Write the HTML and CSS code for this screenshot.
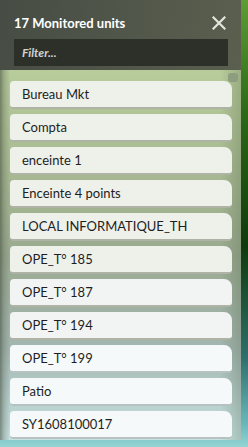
FILE: index.html
```html
<!DOCTYPE html>
<html lang="en">

<head>
    <meta charset="UTF-8">
    <meta name="viewport" content="width=device-width, initial-scale=1.0">
    <title>Monitored units</title>
    <link rel="stylesheet" href="styles.css">
</head>

<body>
    <div id="panel">
        <div class="header">
            <div class="title-row">
                <h2 class="title">17 Monitored units</h2>
                <span class="close">
                    <svg width="14" height="14" viewBox="0 0 14 14">
                        <path d="M1.5 1.5 L12.5 12.5 M12.5 1.5 L1.5 12.5" stroke="#e4e4dc" stroke-width="2.2" stroke-linecap="square"/>
                    </svg>
                </span>
            </div>
            <input type="text" class="filter" placeholder="Filter...">
        </div>

        <div class="list">
            <div class="thumb"></div>
            <div class="item">Bureau Mkt</div>
            <div class="item">Compta</div>
            <div class="item">enceinte 1</div>
            <div class="item">Enceinte 4 points</div>
            <div class="item">LOCAL INFORMATIQUE_TH</div>
            <div class="item">OPE_T° 185</div>
            <div class="item">OPE_T° 187</div>
            <div class="item">OPE_T° 194</div>
            <div class="item">OPE_T° 199</div>
            <div class="item">Patio</div>
            <div class="item">SY1608100017</div>
        </div>
    </div>
</body>

</html>
```

FILE: styles.css
```css
body {
    margin: 0;
    height: 447px;
    overflow: hidden;
    font-family: Lato, "Open Sans", sans-serif;
    background: linear-gradient(to bottom, #5e9c34 0%, #2c6a18 25%, #0f3a0b 55%, #2f6f6a 80%, #6ab8bc 95%, #94d4d4 100%);
}

#panel {
    width: 241px;
    height: 440px;
    display: flex;
    flex-direction: column;
}

.header {
    height: 70px;
    box-sizing: border-box;
    padding: 14px 13px 0 14px;
    background: linear-gradient(100deg, #474c44 0%, #52574b 55%, #5a5f4e 100%);
}

.title-row {
    display: flex;
    align-items: center;
    justify-content: space-between;
    height: 17px;
}

.title {
    margin: 0;
    font-size: 13px;
    font-weight: bold;
    color: #ffffff;
}

.close {
    display: flex;
    margin-right: 2px;
}

.filter {
    display: block;
    margin-top: 8px;
    width: 214px;
    height: 27px;
    box-sizing: border-box;
    padding: 0 8px;
    border: none;
    outline: none;
    background-color: #2d3029;
    font-family: Lato, sans-serif;
    font-size: 12px;
    font-style: italic;
    font-weight: bold;
    color: #d0d4d4;
}

.filter::placeholder {
    color: #cfd3d3;
}

.list {
    position: relative;
    flex: 1;
    display: flex;
    flex-direction: column;
    gap: 5px;
    padding: 11px 9px 0 10px;
    background:
        linear-gradient(to right, rgba(60, 70, 55, 0.55) 0px, rgba(90, 100, 85, 0.3) 4px, rgba(120, 130, 110, 0) 10px),
        linear-gradient(to right, rgba(0, 0, 0, 0) 220px, rgba(70, 90, 60, 0.25) 241px),
        linear-gradient(to bottom, #b7cb9b 0%, #a9bb92 25%, #9aaa90 50%, #a3b6b0 75%, #c6e2e2 100%);
}

.thumb {
    position: absolute;
    top: 3px;
    left: 228px;
    width: 10px;
    height: 9px;
    border-radius: 3px;
    background-color: #8e9c80;
}

.item {
    height: 26px;
    box-sizing: content-box;
    padding-left: 12px;
    display: flex;
    align-items: center;
    border-radius: 4px 8px 4px 4px;
    border-bottom: 2px solid #aeb3a6;
    background-color: #eef0ea;
    font-size: 13px;
    color: #1e1e1e;
}

.item:nth-child(n+8) {
    background-color: #f1f4f2;
}

.item:nth-child(n+10) {
    background-color: #f6f9f9;
    border-bottom-color: #b6c2c2;
}
```
